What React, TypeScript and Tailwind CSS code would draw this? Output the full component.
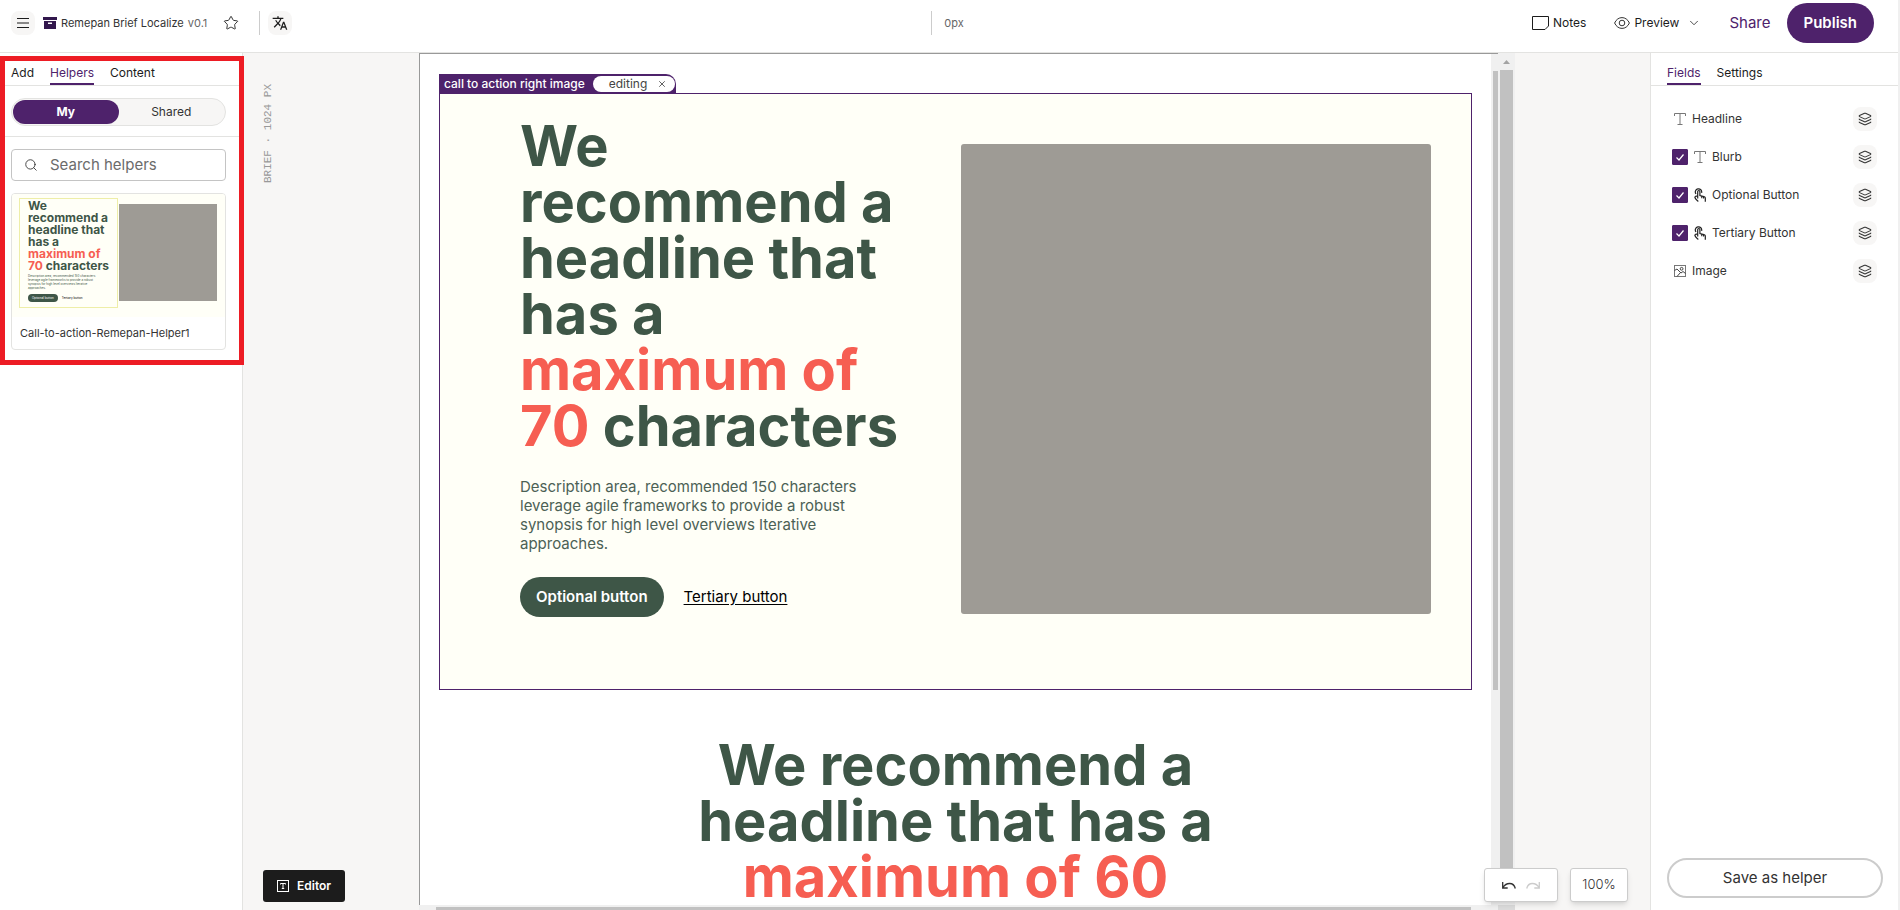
import { useState } from 'react';
import { ChevronDown, Layers, Search, Star, X } from 'lucide-react';
import { MdTranslate } from 'react-icons/md';
import clsx from 'clsx';

type FieldKind = 'text' | 'button' | 'image';

interface Field {
  id: string;
  label: string;
  kind: FieldKind;
  optional?: boolean;
}

const FIELDS: Field[] = [
  { id: 'headline', label: 'Headline', kind: 'text' },
  { id: 'blurb', label: 'Blurb', kind: 'text', optional: true },
  { id: 'optional-button', label: 'Optional Button', kind: 'button', optional: true },
  { id: 'tertiary-button', label: 'Tertiary Button', kind: 'button', optional: true },
  { id: 'image', label: 'Image', kind: 'image' },
];

const DESCRIPTION =
  'Description area, recommended 150 characters leverage agile frameworks to provide a robust synopsis for high level overviews Iterative approaches.';

function TextIcon() {
  return (
    <svg viewBox="0 0 12 12" className="size-3" fill="none" stroke="#777" strokeWidth="1">
      <path d="M0.5 3V0.5h11V3M6 0.5v11M3.5 11.5h5" />
    </svg>
  );
}

function TapIcon() {
  return (
    <svg viewBox="0 0 12 14" className="h-3.5 w-3" fill="none" stroke="#222" strokeWidth="1.200">
      <path d="M2 6A3.200 3.200 0 1 1 7.600 4.800" />
      <path d="M3.700 10.400V3.600a1.100 1.100 0 0 1 2.200 0V7.600l4 1a1.400 1.400 0 0 1 1.400 1.500v3.600" />
      <path d="M3.700 8.400C2.200 7.600 0.600 8.400 1 9.800c0.600 1.600 2 2.400 3.400 3.600M7.800 8v2.200M9.600 8.600v1.800" />
    </svg>
  );
}

function ImageIcon() {
  return (
    <svg viewBox="0 0 12 12" className="size-3" fill="none" stroke="#777" strokeWidth="1">
      <rect x="0.5" y="0.5" width="11" height="11" />
      <path d="M0.5 5.5 3 4l4 4 2-1.5 2.5 2M3 11.5 6.5 7.5" stroke="#444" />
      <circle cx="7.6" cy="3.8" r="1.4" stroke="#444" />
    </svg>
  );
}

function FieldIcon({ kind }: { kind: FieldKind }) {
  if (kind === 'button') return <TapIcon />;
  if (kind === 'image') return <ImageIcon />;
  return <TextIcon />;
}

function Tabs({ items, active }: { items: string[]; active: string }) {
  return (
    <div className="flex h-[33px] items-end gap-4 border-b border-[#e3e3e1] text-xs">
      {items.map((item) => (
        <button
          key={item}
          type="button"
          className={clsx(
            'border-b-2 pb-0.5',
            item === active ? 'border-[#4e226b] text-[#4e226b]' : 'border-transparent text-[#1c1c1c]'
          )}
        >
          {item}
        </button>
      ))}
    </div>
  );
}

function TopBar() {
  return (
    <header className="flex h-[53px] shrink-0 items-center border-b border-[#e3e3e1] pr-3.5 pb-1.5 pl-[11px]">
      <div className="flex flex-1 items-center">
        <button type="button" aria-label="Menu" className="grid size-6 place-items-center rounded-lg bg-[#f7f6f5]">
          <svg viewBox="0 0 12 10" className="h-2.5 w-3" stroke="#1c1c1c">
            <path d="M0 0.5h12M0 5h12M0 9.5h12" />
          </svg>
        </button>
        <svg viewBox="0 0 14 12" className="ml-2 h-3 w-3.5" fill="#32174d">
          <path d="M0 0h14v3H0zM1 4h12v8H1z" />
          <path d="M5 5.5h4V7H5z" fill="#fff" />
        </svg>
        <span className="ml-1 text-[11px] text-[#333]">Remepan Brief Localize</span>
        <span className="ml-1 text-[11px] text-[#666]">v0.1</span>
        <button type="button" aria-label="Favourite" className="ml-4">
          <Star className="size-4 text-[#333]" strokeWidth={1.5} />
        </button>
        <div className="ml-5 h-6 w-px bg-[#ccc]" />
        <button type="button" aria-label="Translate" className="ml-2 grid size-6 place-items-center rounded-lg bg-[#f7f6f5]">
          <MdTranslate className="size-4 text-[#1c1c1c]" />
        </button>
      </div>
      <div className="flex h-6 items-center border-l border-[#ccc] pl-3 text-[11px] text-[#666]">0px</div>
      <div className="flex flex-1 items-center justify-end text-xs text-[#1c1c1c]">
        <button type="button" className="flex items-center gap-1">
          <svg viewBox="0 0 17 14" className="h-3.5 w-[17px]" fill="none" stroke="#1c1c1c">
            <path d="M0.5 0.5h16v9.5l-3.5 3.5H0.5z" />
          </svg>
          Notes
        </button>
        <button type="button" className="ml-7 flex items-center gap-1">
          <svg viewBox="0 0 16 12" className="h-3 w-4" fill="none" stroke="#333">
            <path d="M0.6 6C2.2 2.4 5 0.6 8 0.6S13.8 2.4 15.4 6C13.8 9.6 11 11.4 8 11.4S2.2 9.6 0.6 6Z" />
            <circle cx="8" cy="6" r="2.8" />
          </svg>
          Preview
          <ChevronDown className="ml-1 size-3.5 text-[#333]" strokeWidth={1.5} />
        </button>
        <button type="button" className="ml-7 text-[15px] text-[#4e226b]">
          Share
        </button>
        <button
          type="button"
          className="mr-2.5 ml-4 h-10 rounded-full bg-[#4e226b] px-[17px] text-[15px] font-semibold text-white"
        >
          Publish
        </button>
      </div>
    </header>
  );
}

function HelperCard() {
  return (
    <article className="mt-3 mr-4 ml-[11px] overflow-hidden rounded-sm border border-[#e3e3e1]">
      <div className="flex h-[123px] items-start bg-[#fffff7] pt-1 pl-[7px]">
        <div className="h-[110px] w-[99px] border border-[#eeeea8] pt-px pl-2">
          <h3 className="w-[84px] text-[12px] leading-[12px] font-bold whitespace-nowrap text-[#3e5647]">
            We
            <br />
            recommend a
            <br />
            headline that
            <br />
            has a
            <br />
            <span className="text-[#f65e52]">maximum of</span>
            <br />
            <span className="text-[#f65e52]">70</span> characters
          </h3>
          <p className="mt-0.5 w-[74px] text-[3px] leading-[4px] text-[#3e5647]">{DESCRIPTION}</p>
          <div className="mt-1 flex items-center gap-1 text-[3px] leading-[8px]">
            <span className="rounded-full bg-[#3e5647] px-1 text-white">Optional button</span>
            <span className="text-black">Tertiary button</span>
          </div>
        </div>
        <div className="mt-1.5 ml-px h-[97px] w-[98px] bg-[#9e9b95]" />
      </div>
      <p className="h-8 px-2 pt-2 text-[11px] leading-4 text-[#333]">Call-to-action-Remepan-Helper1</p>
    </article>
  );
}

function HelpersPanel() {
  const [scope, setScope] = useState('My');

  return (
    <aside className="relative z-10 w-[243px] shrink-0 border-r border-[#e3e3e1] bg-white">
      <div className="*:pl-[11px]">
        <Tabs items={['Add', 'Helpers', 'Content']} active="Helpers" />
      </div>
      <div className="border-b border-[#e3e3e1] pt-3 pr-4 pb-2.5 pl-[11px]">
        <div className="flex h-7 w-full rounded-full border border-[#e3e3e1] bg-[#f7f6f5] p-px text-xs">
          {['My', 'Shared'].map((name) => (
            <button
              key={name}
              type="button"
              onClick={() => setScope(name)}
              className={clsx(
                'flex-1 rounded-full',
                scope === name ? 'bg-[#4e226b] font-bold text-white' : 'text-[#333]'
              )}
            >
              {name}
            </button>
          ))}
        </div>
      </div>
      <label className="mt-3 mr-4 ml-[11px] flex h-8 items-center gap-3 rounded-sm border border-[#c4c4c4] px-3">
        <Search className="size-3.5 shrink-0 text-[#333]" strokeWidth={1.5} />
        <input
          type="search"
          aria-label="Search helpers"
          placeholder="Search helpers"
          className="w-full min-w-0 text-[15px] outline-none placeholder:text-[#6b6b6b]"
        />
      </label>
      <HelperCard />
      {/* highlight frame around the helpers area */}
      <div className="pointer-events-none absolute top-[3px] left-0 h-[309px] w-[244px] border-[5px] border-[#ed1c24]" />
    </aside>
  );
}

function CallToAction() {
  return (
    <section className="mr-[19px] ml-[19px] mt-5">
      <div className="flex h-5 w-fit items-center rounded-tr-[10px] bg-[#4e226b] pr-px pl-[5px] text-xs font-medium text-white">
        call to action right image
        <span className="ml-2 flex h-4 items-center gap-2.5 rounded-full bg-white pr-2 pl-4 font-normal text-[#444]">
          editing
          <button type="button" aria-label="Stop editing">
            <X className="size-2.5" strokeWidth={2} />
          </button>
        </span>
      </div>
      <div className="-mt-px grid h-[597px] grid-cols-[441fr_471fr] items-start border border-[#4e226b] bg-[#fffff7] pr-10 pl-20">
        <div className="pt-6 pr-12">
          <h1 className="text-[56px] leading-[56px] font-bold text-[#3e5647]">
            We recommend a headline that has a <span className="text-[#f65e52]">maximum of 70</span> characters
          </h1>
          <p className="mt-[23px] max-w-[360px] text-[15px] leading-[19px] font-normal text-[#4c6155]">{DESCRIPTION}</p>
          <div className="mt-6 flex items-center gap-5 text-[15px]">
            <button type="button" className="h-10 rounded-full bg-[#3e5647] px-4 font-semibold text-white">
              Optional button
            </button>
            <a href="#tertiary" className="text-black underline underline-offset-2">
              Tertiary button
            </a>
          </div>
        </div>
        <div className="mt-[50px] aspect-square rounded-[3px] bg-[#9e9b95]" />
      </div>
    </section>
  );
}

function Canvas() {
  return (
    <main className="relative flex min-w-0 flex-1 bg-[#f7f6f5] pr-[135px]">
      <p className="w-44 pt-[31px] pl-[17px]">
        <span className="inline-block rotate-180 font-['Liberation_Mono',monospace] text-[11px] leading-4 text-[#999] [writing-mode:vertical-rl]">
          BRIEF · 1024 PX
        </span>
      </p>

      <div className="flex min-w-0 flex-1 flex-col overflow-hidden">
        <div className="flex min-h-0 flex-1 border-t border-l border-[#999] bg-white">
          <div className="min-w-0 flex-1 overflow-hidden">
            <CallToAction />
            <h2 className="mx-auto mt-[47px] max-w-[560px] text-center text-[56px] leading-[56px] font-bold text-[#3e5647]">
              We recommend a headline that has a <span className="text-[#f65e52]">maximum of 60</span>
            </h2>
          </div>
          <div className="w-[7px] bg-[#f0f0f0] pt-[17px] pl-0.5">
            <div className="h-[619px] bg-[#c1c1c1]" />
          </div>
        </div>
        <div className="h-[5px] shrink-0 bg-[#f0f0f0] pt-0.5 pr-[27px] pl-[17px]">
          <div className="h-full bg-[#c1c1c1]" />
        </div>
      </div>

      <div className="flex w-[17px] shrink-0 flex-col items-center bg-[#f0f0f0]">
        <svg viewBox="0 0 7 4" className="mt-[7px] mb-1.5 h-1 w-[7px]" fill="#a3a3a3">
          <path d="M3.5 0 7 4H0z" />
        </svg>
        <div className="w-[13px] flex-1 bg-[#c1c1c1]" />
        <div className="mt-3 h-[5px] w-full bg-[#dcdcdc]" />
      </div>

      <button
        type="button"
        className="absolute bottom-2 left-5 flex h-8 items-center gap-2 rounded-[3px] bg-[#1c1c1c] px-3.5 text-xs font-semibold text-white"
      >
        <svg viewBox="0 0 12 12" className="size-3" fill="none" stroke="#fff">
          <rect x="0.5" y="0.5" width="11" height="11" />
          <path d="M3.5 4.5V3.5h5v1M6 3.5v5M4.8 8.5h2.4" />
        </svg>
        Editor
      </button>

      <div className="absolute right-[22px] bottom-2 flex gap-3">
        <div className="flex h-[34px] w-[74px] items-center justify-center gap-2.5 rounded-[3px] border border-[#ccc] bg-white shadow-md">
          <button type="button" aria-label="Undo">
            <svg viewBox="0 0 14 7" className="h-[7px] w-3.5" fill="none" stroke="#333" strokeWidth="1.3">
              <path d="M0.7 0v6h5M1 5.5C4 0.5 11.5-0.5 13.3 6.5" />
            </svg>
          </button>
          <button type="button" aria-label="Redo">
            <svg viewBox="0 0 14 7" className="h-[7px] w-3.5" fill="none" stroke="#ccc" strokeWidth="1.3">
              <path d="M13.3 0v6h-5M13 5.5C10 0.5 2.5-0.5 0.7 6.5" />
            </svg>
          </button>
        </div>
        <button
          type="button"
          className="h-[34px] w-[58px] rounded-[3px] border border-[#ccc] bg-white text-[13px] font-light text-[#333] shadow-md"
        >
          100%
        </button>
      </div>
    </main>
  );
}

function FieldsPanel() {
  return (
    <aside className="flex w-[248px] shrink-0 flex-col border-l border-[#e3e3e1] bg-white">
      <div className="*:pl-4">
        <Tabs items={['Fields', 'Settings']} active="Fields" />
      </div>
      <ul className="flex flex-col gap-3.5 px-[21px] pt-[21px]">
        {FIELDS.map((field) => (
          <li key={field.id} className="flex h-6 items-center text-xs text-[#333]">
            {field.optional && (
              <span className="mr-1.5 grid size-4 place-items-center">
                <input
                  id={field.id}
                  type="checkbox"
                  defaultChecked
                  className="col-start-1 row-start-1 size-4 appearance-none rounded-[1px] border border-[#4e226b] checked:bg-[#4e226b]"
                />
                <svg
                  viewBox="0 0 8 7"
                  className="pointer-events-none col-start-1 row-start-1 h-[7px] w-2"
                  fill="none"
                  stroke="#fff"
                  strokeWidth="1.2"
                >
                  <path d="M0.5 3.5 3 6 7.5 0.5" />
                </svg>
              </span>
            )}
            <label
              htmlFor={field.optional ? field.id : undefined}
              className={clsx('flex items-center gap-1.5', !field.optional && 'ml-0.5')}
            >
              <FieldIcon kind={field.kind} />
              {field.label}
            </label>
            <button
              type="button"
              aria-label={`${field.label} layers`}
              className="ml-auto grid size-6 place-items-center rounded-lg bg-[#f7f6f5]"
            >
              <Layers className="size-3.5 text-[#333]" strokeWidth={1.75} />
            </button>
          </li>
        ))}
      </ul>
      <button
        type="button"
        className="mr-[15px] mb-3 ml-4 mt-auto h-10 rounded-full border-2 border-[#ccc] text-[15px] text-[#333]"
      >
        Save as helper
      </button>
    </aside>
  );
}

export default function App() {
  return (
    <div className="h-screen overflow-hidden bg-[#f0f0f0] pr-0.5 font-['Inter',sans-serif]">
      <div className="flex h-full flex-col bg-white">
        <TopBar />
        <div className="flex min-h-0 flex-1">
          <HelpersPanel />
          <Canvas />
          <FieldsPanel />
        </div>
      </div>
    </div>
  );
}
